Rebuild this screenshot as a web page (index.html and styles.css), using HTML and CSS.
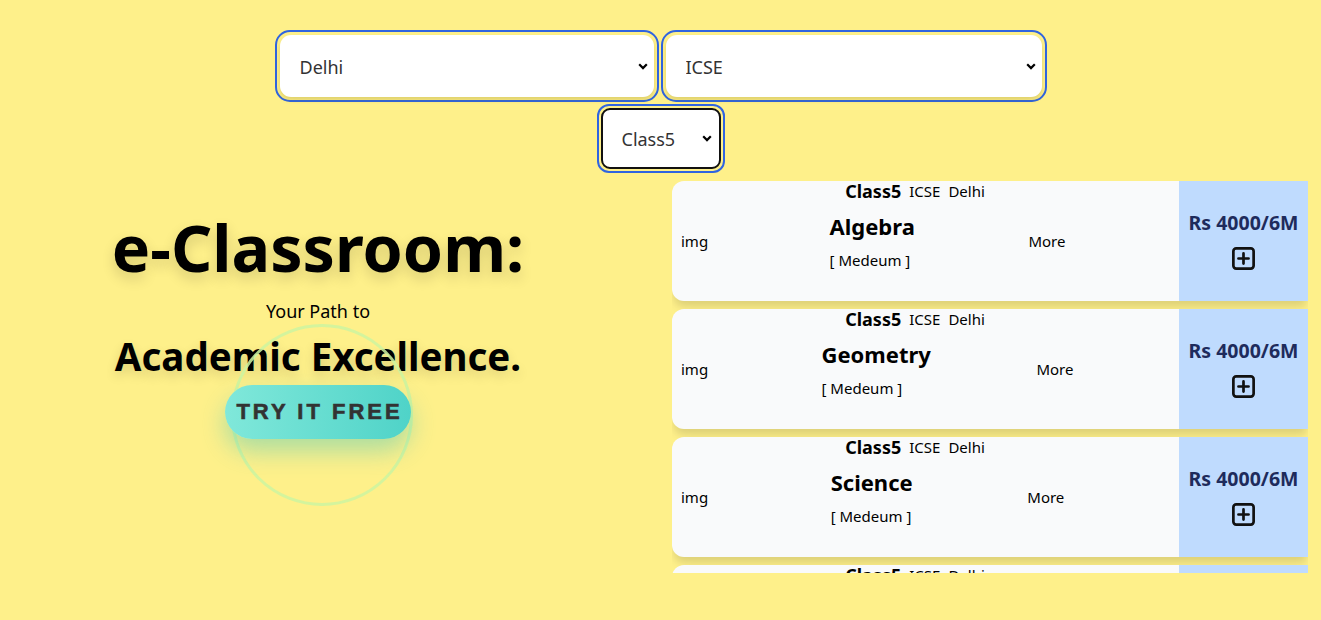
FILE: index.html
```html
<!DOCTYPE html>
<html lang="en">
<head>
<meta charset="utf-8">
<title>e-Classroom</title>
<link rel="stylesheet" href="styles.css">
</head>
<body>
<div class="filters">
  <div class="filter-row">
    <div class="select-ring wide"><select class="select"><option>Delhi</option></select></div>
    <div class="select-ring wide2"><select class="select"><option>ICSE</option></select></div>
  </div>
  <div class="filter-row">
    <div class="select-ring small"><select class="select dark"><option>Class5</option></select></div>
  </div>
</div>

<div class="main">
  <section class="hero">
    <h1 class="hero-title">e-Classroom:</h1>
    <p class="hero-sub">Your Path to</p>
    <h2 class="hero-title2">Academic Excellence.</h2>
    <div class="cta-wrap">
      <button class="cta">TRY IT FREE</button>
    </div>
  </section>

  <section class="cards">
    <div class="card">
      <div class="card-body">
        <div class="card-meta"><b>Class5</b><span>ICSE</span><span>Delhi</span></div>
        <div class="card-row">
          <div class="card-img">img</div>
          <div class="card-spread">
            <div class="card-info">
              <div class="card-title">Algebra</div>
              <div class="card-medium">[ Medeum ]</div>
            </div>
            <div class="card-more">More</div>
          </div>
        </div>
      </div>
      <div class="card-price">
        <div class="price">Rs 4000/6M</div>
        <svg class="plus" viewBox="0 0 24 24" width="27" height="27" fill="none" stroke="#111" stroke-width="2.4" stroke-linecap="round" stroke-linejoin="round"><rect x="3" y="3" width="18" height="18" rx="2.5"/><path d="M12 7.5v9M7.5 12h9"/></svg>
      </div>
    </div>

    <div class="card">
      <div class="card-body">
        <div class="card-meta"><b>Class5</b><span>ICSE</span><span>Delhi</span></div>
        <div class="card-row">
          <div class="card-img">img</div>
          <div class="card-spread">
            <div class="card-info">
              <div class="card-title">Geometry</div>
              <div class="card-medium">[ Medeum ]</div>
            </div>
            <div class="card-more">More</div>
          </div>
        </div>
      </div>
      <div class="card-price">
        <div class="price">Rs 4000/6M</div>
        <svg class="plus" viewBox="0 0 24 24" width="27" height="27" fill="none" stroke="#111" stroke-width="2.4" stroke-linecap="round" stroke-linejoin="round"><rect x="3" y="3" width="18" height="18" rx="2.5"/><path d="M12 7.5v9M7.5 12h9"/></svg>
      </div>
    </div>

    <div class="card">
      <div class="card-body">
        <div class="card-meta"><b>Class5</b><span>ICSE</span><span>Delhi</span></div>
        <div class="card-row">
          <div class="card-img">img</div>
          <div class="card-spread">
            <div class="card-info">
              <div class="card-title">Science</div>
              <div class="card-medium">[ Medeum ]</div>
            </div>
            <div class="card-more">More</div>
          </div>
        </div>
      </div>
      <div class="card-price">
        <div class="price">Rs 4000/6M</div>
        <svg class="plus" viewBox="0 0 24 24" width="27" height="27" fill="none" stroke="#111" stroke-width="2.4" stroke-linecap="round" stroke-linejoin="round"><rect x="3" y="3" width="18" height="18" rx="2.5"/><path d="M12 7.5v9M7.5 12h9"/></svg>
      </div>
    </div>

    <div class="card">
      <div class="card-body">
        <div class="card-meta"><b>Class5</b><span>ICSE</span><span>Delhi</span></div>
        <div class="card-row">
          <div class="card-img">img</div>
          <div class="card-spread">
            <div class="card-info">
              <div class="card-title">English</div>
              <div class="card-medium">[ Medeum ]</div>
            </div>
            <div class="card-more">More</div>
          </div>
        </div>
      </div>
      <div class="card-price">
        <div class="price">Rs 4000/6M</div>
        <svg class="plus" viewBox="0 0 24 24" width="27" height="27" fill="none" stroke="#111" stroke-width="2.4" stroke-linecap="round" stroke-linejoin="round"><rect x="3" y="3" width="18" height="18" rx="2.5"/><path d="M12 7.5v9M7.5 12h9"/></svg>
      </div>
    </div>
  </section>
</div>
</body>
</html>
```
FILE: styles.css
```css
* { box-sizing: border-box; }
html, body { height: 100%; }
body {
  margin: 0;
  background: #fef08a;
  font-family: "Noto Sans", "Open Sans", sans-serif;
  color: #000;
  overflow: hidden;
}

/* filters */
.filters {
  padding-top: 30px;
  display: flex;
  flex-direction: column;
  align-items: center;
  gap: 2px;
}
.filter-row {
  display: flex;
  justify-content: center;
  gap: 2px;
}
.select-ring {
  border: 2px solid #2f64e0;
  border-radius: 15px;
  padding: 3px;
  height: 72px;
}
.select-ring.wide { width: 384px; }
.select-ring.wide2 { width: 386px; }
.select-ring.small {
  width: 128px;
  height: 69px;
  border-radius: 12px;
  padding: 2px;
}
.select {
  appearance: none;
  -webkit-appearance: none;
  width: 100%;
  height: 100%;
  border: 0;
  border-radius: 11px;
  background-color: #fff;
  background-image: url("data:image/svg+xml;utf8,<svg xmlns='http://www.w3.org/2000/svg' width='10' height='7' viewBox='0 0 10 7'><path d='M1.2 1.3 5 5.1 8.8 1.3' fill='none' stroke='%23000' stroke-width='2.2'/></svg>");
  background-repeat: no-repeat;
  background-position: right 6px center;
  background-size: 10px 7px;
  box-shadow: 0 3px 4px rgba(120, 100, 0, 0.22);
  padding: 2px 20px 0;
  font-family: "Noto Sans", "Open Sans", sans-serif;
  font-size: 18px;
  color: #333;
  outline: none;
}
.select.dark {
  border: 2px solid #111;
  border-radius: 9px;
  padding: 0 0 0 19px;
  background-position: right 7px center;
  box-shadow: none;
}

/* main */
.main {
  display: flex;
  margin-top: 8px;
}
.hero {
  width: 636px;
  flex-shrink: 0;
  display: flex;
  flex-direction: column;
  align-items: center;
  padding-top: 28px;
}
.hero-title {
  margin: 0;
  font-size: 64.5px;
  line-height: 76px;
  font-weight: 700;
  text-shadow: 0 6px 14px rgba(0, 0, 0, 0.16);
}
.hero-sub {
  margin: 14px 0 0;
  font-size: 18px;
  line-height: 24px;
}
.hero-title2 {
  margin: 8px 0 0;
  font-size: 38.5px;
  line-height: 50px;
  font-weight: 700;
  text-shadow: 0 5px 12px rgba(0, 0, 0, 0.14);
}
.cta-wrap {
  position: relative;
  margin-top: 4px;
}
.cta-wrap::before {
  content: "";
  position: absolute;
  left: 50%;
  top: 50%;
  width: 176px;
  height: 176px;
  margin: -88px 0 0 -87px;
  border: 3px solid rgba(205, 245, 160, 0.85);
  border-radius: 50%;
}
.cta {
  position: relative;
  width: 186px;
  height: 54px;
  border: 0;
  border-radius: 27px;
  background: linear-gradient(90deg, #80e8da, #4fd3c8);
  box-shadow: 0 12px 24px rgba(72, 200, 190, 0.45);
  font-family: "Liberation Sans", Arial, sans-serif;
  font-weight: 700;
  font-size: 22px;
  letter-spacing: 3px;
  color: #333;
  -webkit-text-stroke: 0.6px #333;
  padding: 0 0 0 3px;
}

/* cards */
.cards {
  margin-left: 36px;
  width: 636px;
  height: 392px;
  overflow: hidden;
  display: flex;
  flex-direction: column;
  gap: 8px;
}
.card {
  flex-shrink: 0;
  height: 120px;
  display: flex;
  background: #f9fafb;
  border-radius: 12px 0 0 12px;
  box-shadow: 0 8px 8px -2px rgba(0, 0, 0, 0.13);
}
.card-body {
  flex: 1;
  display: flex;
  flex-direction: column;
}
.card-meta {
  height: 21px;
  display: flex;
  justify-content: center;
  align-items: center;
  gap: 8px;
  padding-right: 21px;
  font-size: 15px;
  line-height: 21px;
}
.card-meta b { font-size: 18px; }
.card-row {
  flex: 1;
  display: flex;
  align-items: center;
  padding: 0 0 22px 9px;
}
.card-img {
  width: 35px;
  flex-shrink: 0;
  font-size: 15px;
}
.card-spread {
  flex: 1;
  display: flex;
  justify-content: space-evenly;
  align-items: center;
}
.card-info {
  display: flex;
  flex-direction: column;
}
.card-title {
  font-size: 22px;
  font-weight: 700;
  line-height: 30px;
}
.card-medium {
  margin-top: 9px;
  font-size: 15px;
  line-height: 20px;
}
.card-more { font-size: 15px; }
.card-price {
  width: 129px;
  flex-shrink: 0;
  background: #bfdbfe;
  display: flex;
  flex-direction: column;
  align-items: center;
  justify-content: center;
  gap: 10px;
}
.price {
  font-size: 19.5px;
  font-weight: 700;
  color: #1e2b5c;
  line-height: 24px;
}
.plus { display: block; }
```
